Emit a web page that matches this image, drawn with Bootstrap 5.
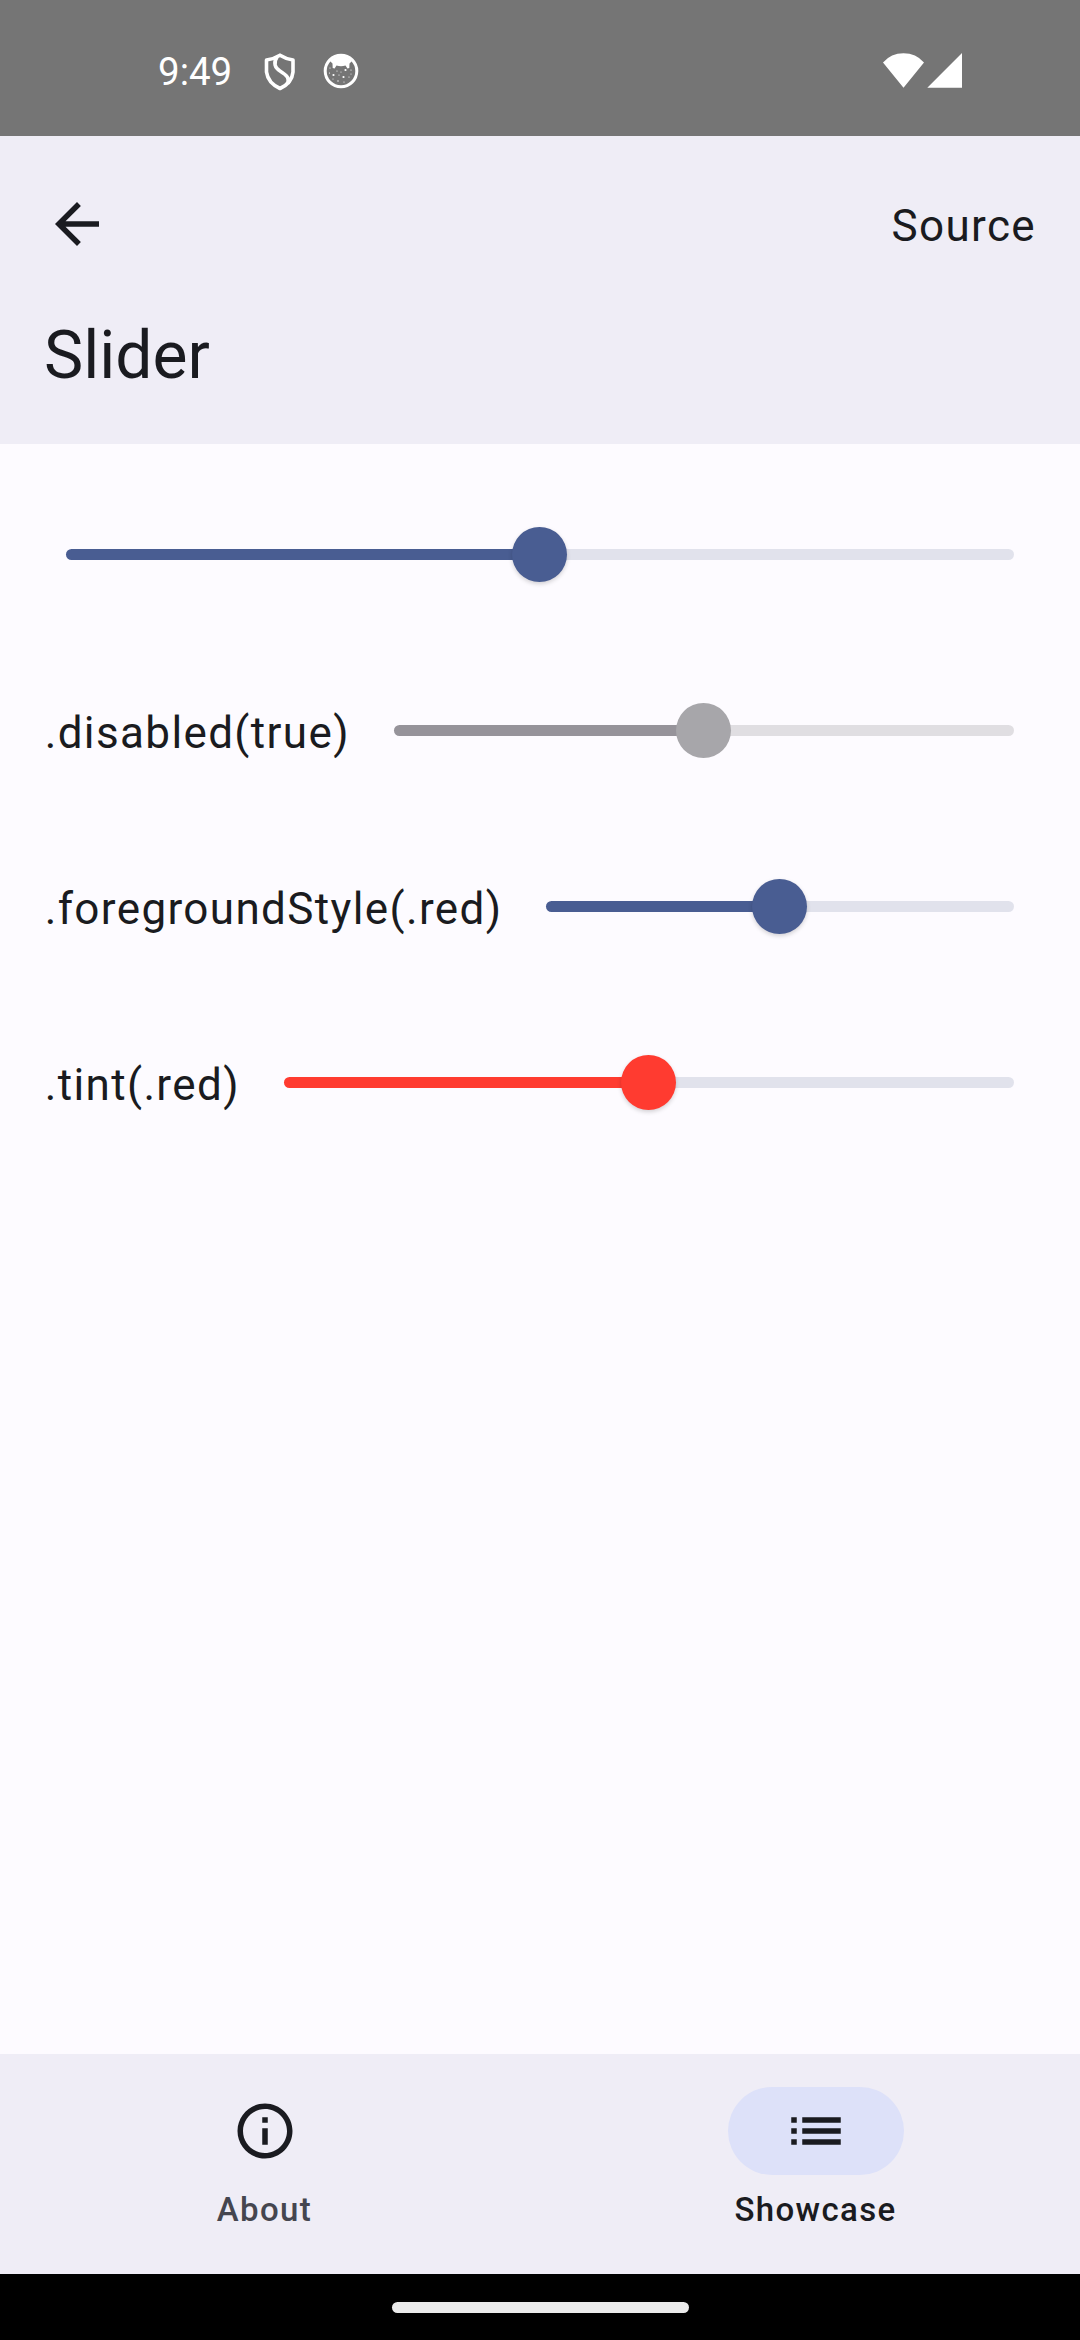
<!DOCTYPE html>
<html lang="en">
<head>
<meta charset="utf-8">
<meta name="viewport" content="width=device-width, initial-scale=1">
<title>Slider</title>
<link href="https://cdn.jsdelivr.net/npm/bootstrap@5.3.0/dist/css/bootstrap.min.css" rel="stylesheet">
<style>
  body { font-family: Roboto, "Liberation Sans", sans-serif; background: #fdfbff; color: #1a1b20; height: 2340px; font-size: 44px; line-height: 66px; letter-spacing: 1.375px; overflow: hidden; }
  .status-bar { height: 136px; background: #757575; color: #fff; padding: 0 118px 0 158px; }
  .clock { font-size: 38.5px; letter-spacing: 0; line-height: 46px; width: 106px; padding-top: 8px; }
  .shield-icon { margin-top: 7px; }
  .face-icon { margin: 6px auto 0 27px; }
  .signal-icon { margin-top: 5px; }
  .app-header { height: 308px; background: #efedf6; padding: 53px 44px 0; }
  .app-title { font-size: 66px; line-height: 77px; letter-spacing: 0; font-weight: 400; padding-top: 58px; }
  .source-link { color: inherit; text-decoration: none; padding-top: 4px; }
  main { padding: 22.5px 44px 0; }
  .slider-row { height: 176px; }
  .slider-label { padding: 5px 0 0 .7px; margin-right: 44px; }
  .slider-row .form-range { --fill: #495d92; --rest: #e1e2ec; height: 55px; margin-right: 22.5px; flex: 1; min-width: 0; width: auto; }
  .slider-row .only-range { margin-left: 22px; }
  .slider-row .form-range::-webkit-slider-runnable-track { height: 11px; border-radius: 6px; background: linear-gradient(to right, var(--fill) 50%, var(--rest) 50%); }
  .slider-row .form-range::-webkit-slider-thumb { width: 55px; height: 55px; margin-top: -22px; border-radius: 50%; background: var(--fill); box-shadow: 0 2px 4px rgba(0,0,0,.17); }
  .slider-row .tint-red { --fill: #ff3b30; }
  .slider-row .form-range:disabled { --fill: #96939a; --rest: #e0dee2; opacity: 1; }
  .slider-row .form-range:disabled::-webkit-slider-thumb { background: #a7a6aa; box-shadow: none; }
  .tab-bar { height: 220px; background: #efedf6; padding-top: 33px; gap: 22px; }
  .tab-item { color: #45464f; font-size: 33px; line-height: 44px; font-weight: 500; text-decoration: none; }
  .tab-item.current { color: #1a1b20; }
  .tab-pill { width: 176px; height: 88px; color: #1a1b20; margin-bottom: 13px; }
  .current .tab-pill { background: #dde1f9; }
  .gesture-bar { height: 66px; background: #000; }
  .gesture-pill { width: 297px; height: 11px; background: #ebebeb; }
</style>
</head>
<body class="d-flex flex-column">
<div class="status-bar d-flex align-items-center flex-shrink-0">
  <span class="clock">9:49</span>
  <svg class="shield-icon" width="32" height="38" viewBox="0 0 32 38" fill="none" stroke="#fff" stroke-width="3.6" stroke-linejoin="round"><path d="M16 2.2Q22 6 29 7V19Q28 30 16 35.5Q4 30 2.5 19V7Q10 6 16 2.2Z"/><path d="M13 4C9 10 11 15 16 18C24 23 25 25 24 31"/></svg>
  <svg class="face-icon" width="36" height="36" viewBox="0 0 36 36"><circle cx="18" cy="18" r="15.8" fill="none" stroke="#fff" stroke-width="3"/><path d="M7 8Q18-3 29 8L26.5 10.5L26.3 15L24.4 15.4L22.5 12.4Q18 14 13.5 12.4L11.6 15.4L9.7 15L9.5 10.5Z" fill="#fff"/><g fill="#fff"><circle cx="10.5" cy="22" r="1.1"/><circle cx="22.5" cy="17" r="1.1"/><circle cx="20.5" cy="24" r="1.1"/><circle cx="14" cy="18" r=".6"/><circle cx="6.5" cy="20" r=".6"/><circle cx="28" cy="17" r=".6"/><circle cx="16" cy="22" r=".6"/><circle cx="26" cy="24" r=".6"/><circle cx="15" cy="28" r=".7"/><circle cx="21" cy="29" r=".6"/><circle cx="7" cy="15" r=".6"/><circle cx="10" cy="26" r=".5"/><circle cx="18" cy="19" r=".5"/><circle cx="28" cy="21" r=".5"/></g></svg>
  <svg class="signal-icon" width="80" height="36" viewBox="0 0 80 36" fill="#fff"><path d="M1 9.5Q9 .3 21.5 .3Q34 .3 42 9.5L21.5 34.7ZM80 0V34.7H45.3Z"/></svg>
</div>
<header class="app-header flex-shrink-0">
  <div class="d-flex justify-content-between align-items-center">
    <svg width="66" height="66" viewBox="0 0 24 24" fill="currentColor"><path d="M20 11H7.83l5.59-5.59L12 4l-8 8 8 8 1.41-1.41L7.83 13H20z"/></svg>
    <a class="source-link" href="#">Source</a>
  </div>
  <h1 class="app-title m-0">Slider</h1>
</header>
<main class="flex-grow-1">
  <div class="slider-row d-flex align-items-center"><input type="range" class="form-range only-range" value="50" aria-label="Slider"></div>
  <div class="slider-row d-flex align-items-center"><label class="slider-label" for="s2">.disabled(true)</label><input id="s2" type="range" class="form-range" value="50" disabled></div>
  <div class="slider-row d-flex align-items-center"><label class="slider-label" for="s3">.foregroundStyle(.red)</label><input id="s3" type="range" class="form-range" value="50"></div>
  <div class="slider-row d-flex align-items-center"><label class="slider-label" for="s4">.tint(.red)</label><input id="s4" type="range" class="form-range tint-red" value="50"></div>
</main>
<nav class="tab-bar d-flex flex-shrink-0">
  <a href="#" class="tab-item d-flex flex-column align-items-center flex-fill w-50">
    <span class="tab-pill rounded-pill d-flex align-items-center justify-content-center"><svg width="66" height="66" viewBox="0 0 24 24" fill="currentColor"><path d="M11 7h2v2h-2zm0 4h2v6h-2zm1-9C6.48 2 2 6.48 2 12s4.48 10 10 10 10-4.48 10-10S17.52 2 12 2zm0 18c-4.41 0-8-3.59-8-8s3.59-8 8-8 8 3.59 8 8-3.59 8-8 8z"/></svg></span>
    About
  </a>
  <a href="#" class="tab-item current d-flex flex-column align-items-center flex-fill w-50">
    <span class="tab-pill rounded-pill d-flex align-items-center justify-content-center"><svg width="66" height="66" viewBox="0 0 24 24" fill="currentColor"><path d="M3 13h2v-2H3zm0 4h2v-2H3zm0-8h2V7H3zm4 4h14v-2H7zm0 4h14v-2H7zM7 7v2h14V7z"/></svg></span>
    Showcase
  </a>
</nav>
<div class="gesture-bar d-flex align-items-center justify-content-center flex-shrink-0"><div class="gesture-pill rounded-pill"></div></div>
<script src="https://cdn.jsdelivr.net/npm/bootstrap@5.3.0/dist/js/bootstrap.bundle.min.js"></script>
</body>
</html>
